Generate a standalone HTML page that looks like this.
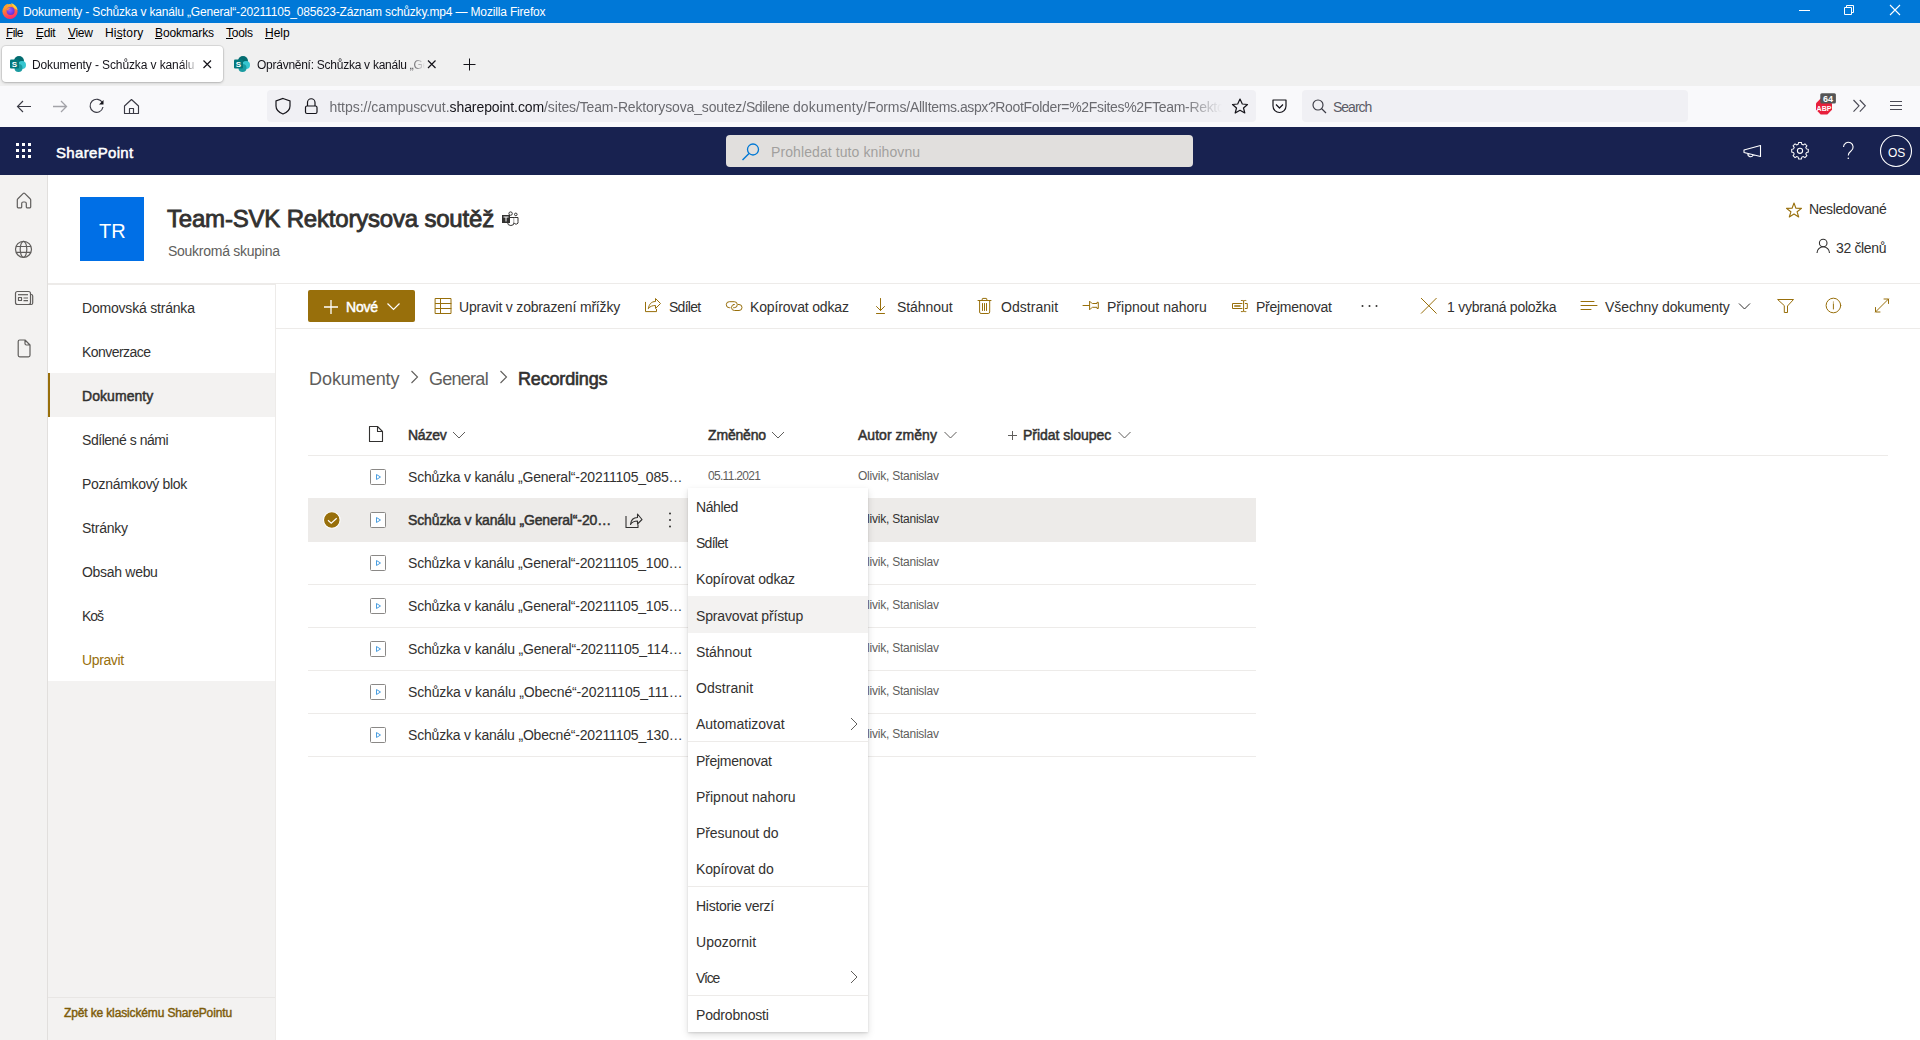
<!DOCTYPE html>
<html><head><meta charset="utf-8"><title>SharePoint</title>
<style>
html,body{margin:0;padding:0;width:1920px;height:1040px;overflow:hidden;background:#fff;font-family:"Liberation Sans",sans-serif;}
.t{position:absolute;white-space:nowrap;line-height:1;}
.r{position:absolute;}
svg.r{overflow:visible}
</style></head><body>
<div class="r" style="left:0px;top:0px;width:1920px;height:23px;background:#0078d7;"></div>
<div class="r" style="left:0px;top:23px;width:1920px;height:63px;background:#f0f0f0;"></div>
<div class="r" style="left:0px;top:86px;width:1920px;height:41px;background:#f9f9fb;"></div>
<div class="t" style="left:23.00px;top:6px;font-size:12px;color:#fff;letter-spacing:-0.167px;">Dokumenty - Schůzka v kanálu „General“-20211105_085623-Záznam schůzky.mp4 — Mozilla Firefox</div>
<div class="t" style="left:6.00px;top:27px;font-size:12px;color:#000;letter-spacing:-0.667px;">File</div>
<div class="t" style="left:36.00px;top:27px;font-size:12px;color:#000;letter-spacing:-0.333px;">Edit</div>
<div class="t" style="left:68.00px;top:27px;font-size:12px;color:#000;letter-spacing:-0.333px;">View</div>
<div class="t" style="left:105.00px;top:27px;font-size:12px;color:#000;letter-spacing:0.167px;">History</div>
<div class="t" style="left:155.00px;top:27px;font-size:12px;color:#000;letter-spacing:-0.125px;">Bookmarks</div>
<div class="t" style="left:226.00px;top:27px;font-size:12px;color:#000;letter-spacing:-0.250px;">Tools</div>
<div class="t" style="left:265.00px;top:27px;font-size:12px;color:#000;">Help</div>
<div class="r" style="left:6px;top:38px;width:6px;height:1px;background:#000;"></div>
<div class="r" style="left:36px;top:38px;width:6px;height:1px;background:#000;"></div>
<div class="r" style="left:68px;top:38px;width:7px;height:1px;background:#000;"></div>
<div class="r" style="left:116px;top:38px;width:6px;height:1px;background:#000;"></div>
<div class="r" style="left:155px;top:38px;width:7px;height:1px;background:#000;"></div>
<div class="r" style="left:226px;top:38px;width:7px;height:1px;background:#000;"></div>
<div class="r" style="left:265px;top:38px;width:8px;height:1px;background:#000;"></div>
<div class="r" style="left:2px;top:46px;width:221px;height:36px;background:#fff;border-radius:4px;box-shadow:0 0 0 1px rgba(0,0,0,.08),0 1px 3px rgba(0,0,0,.2)"></div>
<div class="r" style="left:32px;top:56px;width:168px;height:18px;overflow:hidden;-webkit-mask-image:linear-gradient(to right,#000 150px,transparent 166px)">
<div class="t" style="left:0.00px;top:3px;font-size:12px;color:#15141a;letter-spacing:-0.11px">Dokumenty - Schůzka v kanálu „General“</div>
</div>
<div class="r" style="left:257px;top:56px;width:170px;height:18px;overflow:hidden;-webkit-mask-image:linear-gradient(to right,#000 150px,transparent 168px)">
<div class="t" style="left:0.00px;top:3px;font-size:12px;color:#15141a;letter-spacing:-0.26px">Oprávnění: Schůzka v kanálu „General“</div>
</div>
<div class="r" style="left:267px;top:90px;width:989px;height:32px;background:#f0f0f4;border-radius:4px"></div>
<div class="r" style="left:1302px;top:90px;width:386px;height:32px;background:#f0f0f4;border-radius:4px"></div>
<div class="r" style="left:329px;top:90px;width:896px;height:32px;overflow:hidden;-webkit-mask-image:linear-gradient(to right,#000 855px,transparent 893px)">
<div class="t" style="left:0.50px;top:10px;font-size:14px"><span style="color:#6b6b70;letter-spacing:-0.030px">https://campuscvut.</span><span style="color:#15141a;letter-spacing:-0.084px">sharepoint.com</span><span style="color:#6b6b70;letter-spacing:-0.140px">/sites/Team-Rektorysova_soutez/</span><span style="color:#6b6b70;letter-spacing:-0.460px">Sdilene </span><span style="color:#6b6b70;letter-spacing:0.196px">dokumenty/</span><span style="color:#6b6b70;letter-spacing:-0.122px">Forms/</span><span style="color:#6b6b70;letter-spacing:-0.415px">AllItems.aspx?</span><span style="color:#6b6b70;letter-spacing:-0.318px">RootFolder=%2Fsites%2FTeam-Rekto</span><span style="color:#6b6b70;letter-spacing:0.000px">rysova_soutez</span></div>
</div>
<div class="t" style="left:1333.00px;top:100px;font-size:14px;color:#5b5b66;letter-spacing:-1.000px;">Search</div>
<div class="r" style="left:0px;top:127px;width:1920px;height:48px;background:#182250;"></div>
<div class="t" style="left:56.00px;top:145px;font-size:15px;color:#fff;-webkit-text-stroke:0.53px #fff;letter-spacing:0.333px;">SharePoint</div>
<div class="r" style="left:726px;top:135px;width:467px;height:32px;background:#e1dfdd;border-radius:4px"></div>
<div class="t" style="left:771.00px;top:145px;font-size:14px;color:#a19f9d;letter-spacing:0.091px;">Prohledat tuto knihovnu</div>
<div class="t" style="left:1888.00px;top:147px;font-size:12px;color:#fff;">OS</div>
<div class="r" style="left:0px;top:175px;width:47px;height:865px;background:#f3f2f1;"></div>
<div class="r" style="left:47px;top:175px;width:1px;height:865px;background:#e1dfdd;"></div>
<div class="r" style="left:80px;top:197px;width:64px;height:64px;background:#006fe6;"></div>
<div class="t" style="left:99.00px;top:221px;font-size:20px;color:#fff;">TR</div>
<div class="t" style="left:167.00px;top:207px;font-size:24px;color:#323130;-webkit-text-stroke:0.84px #323130;letter-spacing:-0.192px;">Team-SVK Rektorysova soutěž</div>
<div class="t" style="left:168.00px;top:244px;font-size:14px;color:#605e5c;letter-spacing:-0.267px;">Soukromá skupina</div>
<div class="t" style="left:1809.00px;top:202px;font-size:14px;color:#323130;letter-spacing:-0.400px;">Nesledované</div>
<div class="t" style="left:1836.00px;top:241px;font-size:14px;color:#323130;letter-spacing:-0.357px;">32 členů</div>
<div class="r" style="left:48px;top:283px;width:1872px;height:1px;background:#edebe9;"></div>
<div class="r" style="left:48px;top:284px;width:227px;height:1px;background:#edebe9;"></div>
<div class="r" style="left:48px;top:681px;width:227px;height:359px;background:#f3f2f1;"></div>
<div class="r" style="left:275px;top:284px;width:1px;height:756px;background:#edebe9;"></div>
<div class="r" style="left:48px;top:373px;width:227px;height:44px;background:#f3f2f1;"></div>
<div class="r" style="left:48px;top:373px;width:2px;height:44px;background:#986f0b;"></div>
<div class="t" style="left:82.00px;top:301px;font-size:14px;color:#323130;letter-spacing:-0.200px;">Domovská stránka</div>
<div class="t" style="left:82.00px;top:345px;font-size:14px;color:#323130;letter-spacing:-0.556px;">Konverzace</div>
<div class="t" style="left:82.00px;top:389px;font-size:14px;color:#323130;-webkit-text-stroke:0.49px #323130;letter-spacing:0.062px;">Dokumenty</div>
<div class="t" style="left:82.00px;top:433px;font-size:14px;color:#323130;letter-spacing:-0.462px;">Sdílené s námi</div>
<div class="t" style="left:82.00px;top:477px;font-size:14px;color:#323130;letter-spacing:-0.314px;">Poznámkový blok</div>
<div class="t" style="left:82.00px;top:521px;font-size:14px;color:#323130;letter-spacing:-0.233px;">Stránky</div>
<div class="t" style="left:82.00px;top:565px;font-size:14px;color:#323130;letter-spacing:-0.300px;">Obsah webu</div>
<div class="t" style="left:82.00px;top:609px;font-size:14px;color:#323130;letter-spacing:-1.100px;">Koš</div>
<div class="t" style="left:82.00px;top:653px;font-size:14px;color:#986f0b;letter-spacing:-0.383px;">Upravit</div>
<div class="r" style="left:48px;top:997px;width:227px;height:1px;background:#e8e6e4;"></div>
<div class="t" style="left:64.00px;top:1007px;font-size:12px;color:#7d5c0a;-webkit-text-stroke:0.42px #7d5c0a;letter-spacing:-0.138px;">Zpět ke klasickému SharePointu</div>
<div class="r" style="left:276px;top:328px;width:1644px;height:1px;background:#edebe9;"></div>
<div class="r" style="left:308px;top:290px;width:107px;height:32px;background:#986f0b;border-radius:2px"></div>
<div class="t" style="left:346.00px;top:300px;font-size:14px;color:#fff;-webkit-text-stroke:0.49px #fff;letter-spacing:-0.200px;">Nové</div>
<div class="t" style="left:459.00px;top:300px;font-size:14px;color:#323130;letter-spacing:-0.180px;">Upravit v zobrazení mřížky</div>
<div class="t" style="left:669.00px;top:300px;font-size:14px;color:#323130;letter-spacing:-0.720px;">Sdílet</div>
<div class="t" style="left:750.00px;top:300px;font-size:14px;color:#323130;letter-spacing:-0.157px;">Kopírovat odkaz</div>
<div class="t" style="left:897.00px;top:300px;font-size:14px;color:#323130;letter-spacing:-0.057px;">Stáhnout</div>
<div class="t" style="left:1001.00px;top:300px;font-size:14px;color:#323130;letter-spacing:0.037px;">Odstranit</div>
<div class="t" style="left:1107.00px;top:300px;font-size:14px;color:#323130;letter-spacing:0.014px;">Připnout nahoru</div>
<div class="t" style="left:1256.00px;top:300px;font-size:14px;color:#323130;letter-spacing:-0.260px;">Přejmenovat</div>
<div class="t" style="left:1447.00px;top:300px;font-size:14px;color:#323130;letter-spacing:-0.250px;">1 vybraná položka</div>
<div class="t" style="left:1605.00px;top:300px;font-size:14px;color:#323130;letter-spacing:-0.081px;">Všechny dokumenty</div>
<div class="t" style="left:309.00px;top:370px;font-size:18px;color:#605e5c;letter-spacing:-0.062px;">Dokumenty</div>
<div class="t" style="left:429.00px;top:370px;font-size:18px;color:#605e5c;letter-spacing:-0.733px;">General</div>
<div class="t" style="left:518.00px;top:370px;font-size:18px;color:#323130;-webkit-text-stroke:0.63px #323130;letter-spacing:-0.167px;">Recordings</div>
<div class="t" style="left:408.00px;top:428px;font-size:14px;color:#323130;-webkit-text-stroke:0.49px #323130;letter-spacing:-0.250px;">Název</div>
<div class="t" style="left:708.00px;top:428px;font-size:14px;color:#323130;-webkit-text-stroke:0.49px #323130;letter-spacing:-0.167px;">Změněno</div>
<div class="t" style="left:858.00px;top:428px;font-size:14px;color:#323130;-webkit-text-stroke:0.49px #323130;letter-spacing:0.030px;">Autor změny</div>
<div class="t" style="left:1023.00px;top:428px;font-size:14px;color:#323130;-webkit-text-stroke:0.49px #323130;letter-spacing:-0.031px;">Přidat sloupec</div>
<div class="r" style="left:308px;top:455px;width:1580px;height:1px;background:#edebe9;"></div>
<div class="r" style="left:308px;top:498px;width:948px;height:43px;background:#edebe9;"></div>
<div class="r" style="left:308px;top:541px;width:948px;height:1px;background:#edebe9;"></div>
<div class="r" style="left:308px;top:584px;width:948px;height:1px;background:#edebe9;"></div>
<div class="r" style="left:308px;top:627px;width:948px;height:1px;background:#edebe9;"></div>
<div class="r" style="left:308px;top:670px;width:948px;height:1px;background:#edebe9;"></div>
<div class="r" style="left:308px;top:713px;width:948px;height:1px;background:#edebe9;"></div>
<div class="r" style="left:308px;top:756px;width:948px;height:1px;background:#edebe9;"></div>
<div class="r" style="left:308px;top:498px;width:948px;height:43px;background:#edebe9;"></div>
<div class="t" style="left:408.00px;top:470px;font-size:14px;color:#323130;letter-spacing:-0.210px;">Schůzka v kanálu „General“-20211105_085…</div>
<div class="t" style="left:858.00px;top:470px;font-size:12px;color:#605e5c;letter-spacing:-0.231px;">Olivik, Stanislav</div>
<div class="t" style="left:408.00px;top:513px;font-size:14px;color:#323130;-webkit-text-stroke:0.49px #323130;letter-spacing:-0.131px;">Schůzka v kanálu „General“-20…</div>
<div class="t" style="left:858.00px;top:513px;font-size:12px;color:#323130;letter-spacing:-0.231px;">Olivik, Stanislav</div>
<div class="t" style="left:408.00px;top:556px;font-size:14px;color:#323130;letter-spacing:-0.210px;">Schůzka v kanálu „General“-20211105_100…</div>
<div class="t" style="left:858.00px;top:556px;font-size:12px;color:#605e5c;letter-spacing:-0.231px;">Olivik, Stanislav</div>
<div class="t" style="left:408.00px;top:599px;font-size:14px;color:#323130;letter-spacing:-0.210px;">Schůzka v kanálu „General“-20211105_105…</div>
<div class="t" style="left:858.00px;top:599px;font-size:12px;color:#605e5c;letter-spacing:-0.231px;">Olivik, Stanislav</div>
<div class="t" style="left:408.00px;top:642px;font-size:14px;color:#323130;letter-spacing:-0.185px;">Schůzka v kanálu „General“-20211105_114…</div>
<div class="t" style="left:858.00px;top:642px;font-size:12px;color:#605e5c;letter-spacing:-0.231px;">Olivik, Stanislav</div>
<div class="t" style="left:408.00px;top:685px;font-size:14px;color:#323130;letter-spacing:-0.137px;">Schůzka v kanálu „Obecné“-20211105_111…</div>
<div class="t" style="left:858.00px;top:685px;font-size:12px;color:#605e5c;letter-spacing:-0.231px;">Olivik, Stanislav</div>
<div class="t" style="left:408.00px;top:728px;font-size:14px;color:#323130;letter-spacing:-0.189px;">Schůzka v kanálu „Obecné“-20211105_130…</div>
<div class="t" style="left:858.00px;top:728px;font-size:12px;color:#605e5c;letter-spacing:-0.231px;">Olivik, Stanislav</div>
<div class="t" style="left:708.00px;top:470px;font-size:12px;color:#605e5c;letter-spacing:-0.700px;">05.11.2021</div>
<svg class="r" style="left:0;top:0" width="1920" height="1040" viewBox="0 0 1920 1040" fill="none"><!-- firefox logo -->
<defs>
<linearGradient id="ffg" x1="0" y1="0" x2="0.3" y2="1"><stop offset="0" stop-color="#ffd43b"/><stop offset="0.4" stop-color="#ff8a2b"/><stop offset="1" stop-color="#ff2d6a"/></linearGradient>
<radialGradient id="ffp" cx="0.4" cy="0.4" r="0.7"><stop offset="0" stop-color="#9a5cff"/><stop offset="1" stop-color="#5b2bd0"/></radialGradient>
</defs>
<circle cx="10" cy="11.5" r="7.6" fill="url(#ffg)"/>
<path d="M11 3 C14 4 17 6.5 17.5 10 L14 8 Z" fill="#ffcf3a"/>
<path d="M3.5 8 C4.5 5.5 6 4.2 8 3.8 L7 7 Z" fill="#ff9a2e"/>
<circle cx="10.6" cy="11" r="4" fill="url(#ffp)"/>
<path d="M6.5 9.5 C7.5 8 9.5 7.5 11 8 C9 8.5 8 9.5 8.3 11 Z" fill="#ff9140"/>
<!-- window controls -->
<path d="M1799 10.5 H1810" stroke="#fff" stroke-width="1"/>
<path d="M1844.5 7.5 H1851.5 V14.5 H1844.5 Z M1846.5 7.5 V5.5 H1853.5 V12.5 H1851.5" stroke="#fff" stroke-width="1"/>
<path d="M1890 5 L1900 15 M1900 5 L1890 15" stroke="#fff" stroke-width="1.1"/>
<!-- tab favicons -->
<g transform="translate(10,56)">
 <circle cx="9" cy="5" r="5" fill="#036c70"/><circle cx="12" cy="9" r="4" fill="#37c6d0"/><circle cx="8.5" cy="12" r="4" fill="#1a9ba1"/>
 <rect x="0" y="3.5" width="9" height="9" rx="1" fill="#03787c"/><text x="4.5" y="11" font-size="8" font-weight="bold" fill="#fff" text-anchor="middle" font-family="Liberation Sans">S</text>
</g>
<g transform="translate(234,56)">
 <circle cx="9" cy="5" r="5" fill="#036c70"/><circle cx="12" cy="9" r="4" fill="#37c6d0"/><circle cx="8.5" cy="12" r="4" fill="#1a9ba1"/>
 <rect x="0" y="3.5" width="9" height="9" rx="1" fill="#03787c"/><text x="4.5" y="11" font-size="8" font-weight="bold" fill="#fff" text-anchor="middle" font-family="Liberation Sans">S</text>
</g>
<path d="M203.5 60.5 L211 68 M211 60.5 L203.5 68" stroke="#15141a" stroke-width="1.2"/>
<path d="M428 60.5 L435.5 68 M435.5 60.5 L428 68" stroke="#15141a" stroke-width="1.2"/>
<path d="M469.5 58.5 V70.5 M463.5 64.5 H475.5" stroke="#15141a" stroke-width="1"/>
<!-- nav icons -->
<path d="M31 106.5 H17.5 M23 101 L17.5 106.5 L23 112" stroke="#3b3b45" stroke-width="1.15"/>
<path d="M53 106.5 H66.5 M61 101 L66.5 106.5 L61 112" stroke="#a3a3a8" stroke-width="1.3"/>
<path d="M102.5 103 A6.5 6.5 0 1 0 103 107" stroke="#3b3b45" stroke-width="1.15"/>
<path d="M103.5 100 V104.5 H99 Z" fill="#15141a"/>
<path d="M124.5 106 L131.5 99.5 L138.5 106 V113.5 H124.5 Z M129.5 113.5 V108.5 H133.5 V113.5" stroke="#3b3b45" stroke-width="1.15" stroke-linejoin="round"/>
<path d="M283 98.5 L290 101 V106 C290 110 287 112.5 283 114 C279 112.5 276 110 276 106 V101 Z" stroke="#15141a" stroke-width="1.2"/>
<rect x="305.5" y="106" width="11.5" height="7.5" rx="1.5" stroke="#15141a" stroke-width="1.2"/>
<path d="M307.5 106 V102.5 A3.7 3.7 0 0 1 315 102.5 V106" stroke="#15141a" stroke-width="1.2"/>
<path d="M1240 99 L1242.3 104 L1247.5 104.5 L1243.5 108 L1244.8 113 L1240 110.3 L1235.2 113 L1236.5 108 L1232.5 104.5 L1237.7 104 Z" stroke="#15141a" stroke-width="1.2" stroke-linejoin="round"/>
<path d="M1273 100 H1286 V106 A6.5 6.5 0 0 1 1273 106 Z M1276 104.5 L1279.5 108 L1283 104.5" stroke="#15141a" stroke-width="1.2" stroke-linejoin="round"/>
<circle cx="1318" cy="105" r="5" stroke="#3b3b45" stroke-width="1.15"/>
<path d="M1321.5 108.5 L1326 113" stroke="#3b3b45" stroke-width="1.15"/>
<!-- ABP -->
<path d="M1820.7 98.5 H1827.3 L1832 103.2 V109.8 L1827.3 114.5 H1820.7 L1816 109.8 V103.2 Z" fill="#e8203c"/>
<text x="1824" y="110.5" font-size="7" font-weight="bold" fill="#fff" text-anchor="middle" font-family="Liberation Sans">ABP</text>
<rect x="1820.3" y="93.3" width="15.6" height="10.3" rx="1.5" fill="#555"/>
<text x="1828.1" y="102.2" font-size="9" font-weight="bold" fill="#fff" text-anchor="middle" font-family="Liberation Sans">64</text>
<path d="M1853.5 100 L1859 105.8 L1853.5 111.6 M1859.8 100 L1865.3 105.8 L1859.8 111.6" stroke="#4a4a55" stroke-width="1.15"/>
<path d="M1890 101.5 H1902 M1890 105.5 H1902 M1890 109.5 H1902" stroke="#4a4a55" stroke-width="1.15"/>

<!-- suite bar -->
<g fill="#fff">
<rect x="16" y="143" width="3" height="3"/><rect x="22" y="143" width="3" height="3"/><rect x="28" y="143" width="3" height="3"/>
<rect x="16" y="149" width="3" height="3"/><rect x="22" y="149" width="3" height="3"/><rect x="28" y="149" width="3" height="3"/>
<rect x="16" y="155" width="3" height="3"/><rect x="22" y="155" width="3" height="3"/><rect x="28" y="155" width="3" height="3"/>
</g>
<circle cx="753" cy="149.5" r="5.5" stroke="#0078d4" stroke-width="1.3"/>
<path d="M749 153.5 L742.5 160" stroke="#0078d4" stroke-width="1.4"/>
<path d="M1744 150 L1760.5 145.5 V156.5 L1744 152.5 Z M1748 153.5 A2.5 2.5 0 0 0 1753 154.8" stroke="#fff" stroke-width="1.1" stroke-linejoin="round"/>
<g transform="translate(1800,150.8)" stroke="#fff" stroke-width="1.1">
<circle r="2.6"/>
<path d="M-1.5 -8 H1.5 L2 -6 L3.6 -5.3 L5.4 -6.5 L7.5 -4.4 L6.3 -2.6 L7 -1 L9 -0.5 V2.5 L7 3 L6.3 4.6 L7.5 6.4 L5.4 8.5 L3.6 7.3 L2 8 L1.5 10 H-1.5 L-2 8 L-3.6 7.3 L-5.4 8.5 L-7.5 6.4 L-6.3 4.6 L-7 3 L-9 2.5 V-0.5 L-7 -1 L-6.3 -2.6 L-7.5 -4.4 L-5.4 -6.5 L-3.6 -5.3 L-2 -6 Z" transform="translate(0,-1) scale(0.92)"/>
</g>
<path d="M1843.5 147 A4.8 4.8 0 1 1 1851 151 C1849 152.5 1848.3 153.5 1848.3 155.5" stroke="#fff" stroke-width="1.1"/>
<circle cx="1848.3" cy="158.3" r="0.8" fill="#fff"/>
<circle cx="1896" cy="151" r="15.5" stroke="#fff" stroke-width="1.1"/>

<!-- left rail icons -->
<g stroke="#605e5c" stroke-width="1.2" stroke-linejoin="round">
<path d="M17.3 200 Q17.3 199.2 17.9 198.7 L23.3 193.4 Q24 192.8 24.7 193.4 L30.1 198.7 Q30.7 199.2 30.7 200 V207 Q30.7 207.8 29.9 207.8 H27 Q26.3 207.8 26.3 207 V203.5 Q26.3 202 24.8 202 H23.2 Q21.7 202 21.7 203.5 V207 Q21.7 207.8 21 207.8 H18.1 Q17.3 207.8 17.3 207 Z"/>
<circle cx="23.5" cy="249.3" r="8"/><ellipse cx="23.5" cy="249.3" rx="3.3" ry="8"/><path d="M16 246.5 H31 M16 252.3 H31"/>
<rect x="15.5" y="291.5" width="15" height="13" rx="2"/><path d="M30.5 294.5 H31.2 A1.5 1.5 0 0 1 32.7 296 V303 A1.5 1.5 0 0 1 31.2 304.5 H29"/><path d="M18 294.7 H28"/><rect x="18.5" y="297.5" width="3" height="3"/><path d="M23.5 298 H28 M23.5 300.7 H28"/>
<path d="M19.7 340 H25 L30 345 V355.3 A1.5 1.5 0 0 1 28.5 356.8 H19.7 A1.5 1.5 0 0 1 18.2 355.3 V341.5 A1.5 1.5 0 0 1 19.7 340 Z M25 340 V343.5 A1.5 1.5 0 0 0 26.5 345 H30"/>
</g>

<!-- site header icons -->
<g stroke="#323130" stroke-width="1">
<circle cx="510.6" cy="213.6" r="1.7"/><circle cx="515.8" cy="214.4" r="1.3"/>
<path d="M507.5 217.5 H514.2 V222.2 A3.35 3.35 0 0 1 507.5 222.2 Z" fill="#fff"/>
<path d="M514.2 217.5 H518 V221.5 A2 2 0 0 1 514.2 222.8" fill="#fff"/>
</g>
<rect x="502" y="215" width="8" height="8" fill="#323130"/>
<path d="M503.5 217 H508.5 M506 217 V221.5" stroke="#fff" stroke-width="1"/>
<path d="M1794 203 L1795.9 208.2 L1801.5 208.4 L1797.1 211.8 L1798.7 217 L1794 214 L1789.3 217 L1790.9 211.8 L1786.5 208.4 L1792.1 208.2 Z" stroke="#986f0b" stroke-width="1.1" stroke-linejoin="round"/>
<circle cx="1823.2" cy="243" r="3.8" stroke="#323130" stroke-width="1.1"/>
<path d="M1817 253 A6.2 6.2 0 0 1 1829.5 253" stroke="#323130" stroke-width="1.1"/>

<!-- command bar icons -->
<path d="M331 300 V314 M324 307 H338" stroke="#fff" stroke-width="1.3"/>
<path d="M387.5 303.5 L393.5 309.5 L399.5 303.5" stroke="#fff" stroke-width="1.2"/>
<g stroke="#986f0b" stroke-width="1" stroke-linejoin="round" stroke-linecap="round">
<rect x="435.5" y="298.5" width="15.5" height="15"/><path d="M440.5 298.5 V313.5 M435.5 303.5 H451 M435.5 308.5 H451"/>
<path d="M645.5 302.3 V311.6 H656.5 V309.3"/>
<path d="M648.5 308.3 C649 304 651.5 301.5 655.5 301.5 V298.5 L660.5 303.5 L655.5 308.5 V305.5 C652.5 305.5 650 306.3 648.5 308.3 Z"/>
<path d="M730 307.7 H729.3 A3 3 0 0 1 729.3 301.7 H734.3 A3 3 0 0 1 734.3 307.7 H733.6"/>
<path d="M733.6 304.5 H734.5 A3 3 0 0 0 734.5 310.5 H739 A3 3 0 0 0 739 304.5 H738.3"/>
<path d="M880.5 298.5 V310.5 M876.5 306.5 L880.5 310.5 L884.5 306.5 M876.5 313.5 H884.5"/>
<path d="M978 300.5 H991 M979.6 300.5 V312 A1.5 1.5 0 0 0 981.1 313.5 H988.2 A1.5 1.5 0 0 0 989.7 312 V300.5 M982.2 300.5 V299 A0.6 0.6 0 0 1 982.8 298.4 H986.2 A0.6 0.6 0 0 1 986.8 299 V300.5 M982.5 303.5 V310.5 M984.5 303.5 V310.5 M986.5 303.5 V310.5"/>
<path d="M1083 305.5 H1089.5 M1089.6 301.5 V309.5 M1089.8 301.8 C1091 302 1091.8 303.3 1092.5 303.5 H1097 V302.3 H1098.3 V308.5 H1097 V307.3 H1092.5 C1091.8 307.5 1091 309 1089.8 309.2"/>
<path d="M1242 303.5 H1232.5 V308.5 H1242 M1243.6 300.8 V311.3 M1241.3 300.5 C1242.5 300.3 1243.3 300.6 1243.6 301.2 C1243.9 300.6 1244.7 300.3 1245.9 300.5 M1241.3 311.6 C1242.5 311.8 1243.3 311.5 1243.6 310.9 C1243.9 311.5 1244.7 311.8 1245.9 311.6 M1245.3 303.5 H1247.3 V308.5 H1245.3"/>
<path d="M1234.8 306 H1240" stroke-width="1.6"/>
<path d="M1421.3 298.3 L1436.3 313.3 M1436.3 298.3 L1421.3 313.3"/>
<path d="M1581 301.5 H1594 M1581 305.5 H1597 M1581 309.5 H1591"/>
<path d="M1778 299.5 H1793.5 L1787.5 306 V312.5 H1784.3 V306 Z"/>
<circle cx="1833.4" cy="305.5" r="7.3"/><path d="M1833.4 303.8 V309"/><circle cx="1833.4" cy="302" r="0.6" fill="#986f0b" stroke="none"/>
<path d="M1875.5 312 L1888.5 299 M1884 299 H1888.5 V303.5 M1875.5 307.5 V312 H1880"/>
</g>
<circle cx="1362.5" cy="306" r="1" fill="#323130"/><circle cx="1369.5" cy="306" r="1" fill="#323130"/><circle cx="1376.5" cy="306" r="1" fill="#323130"/>
<path d="M1739 303.5 L1744.5 309 L1750 303.5" stroke="#323130" stroke-width="1"/>

<!-- breadcrumb chevrons -->
<path d="M411.5 371 L417.5 377 L411.5 383 M500.5 371 L506.5 377 L500.5 383" stroke="#605e5c" stroke-width="1.1"/>
<!-- table header -->
<path d="M369.5 426.5 H377.5 L382.5 431.5 V441.5 H369.5 Z M377.5 426.5 V431.5 H382.5" stroke="#323130" stroke-width="1.1" stroke-linejoin="round"/>
<path d="M453 432 L459 438 L465 432 M772 432 L778 438 L784 432 M944.5 432 L950.5 438 L956.5 432 M1118.5 432 L1124.5 438 L1130.5 432" stroke="#605e5c" stroke-width="1"/>
<path d="M1012.5 431 V440 M1008 435.5 H1017" stroke="#605e5c" stroke-width="1"/>
<!-- row icons -->
<g stroke="#8a8886" stroke-width="1" fill="#fff">
<rect x="370.5" y="469.5" width="15" height="15" rx="1"/><rect x="370.5" y="512.5" width="15" height="15" rx="1"/><rect x="370.5" y="555.5" width="15" height="15" rx="1"/><rect x="370.5" y="598.5" width="15" height="15" rx="1"/><rect x="370.5" y="641.5" width="15" height="15" rx="1"/><rect x="370.5" y="684.5" width="15" height="15" rx="1"/><rect x="370.5" y="727.5" width="15" height="15" rx="1"/>
</g>
<g fill="none" stroke="#4a9ee0" stroke-width="1" stroke-linejoin="round">
<path d="M376.5 474.5 L380.5 477 L376.5 479.5 Z"/><path d="M376.5 517.5 L380.5 520 L376.5 522.5 Z"/><path d="M376.5 560.5 L380.5 563 L376.5 565.5 Z"/><path d="M376.5 603.5 L380.5 606 L376.5 608.5 Z"/><path d="M376.5 646.5 L380.5 649 L376.5 651.5 Z"/><path d="M376.5 689.5 L380.5 692 L376.5 694.5 Z"/><path d="M376.5 732.5 L380.5 735 L376.5 737.5 Z"/>
</g>
<!-- selected row -->
<circle cx="331.8" cy="520" r="8.3" fill="#986f0b" stroke="#fff" stroke-width="1.1"/>
<path d="M328 520.3 L331.2 523.1 L336.7 518.3" stroke="#fff" stroke-width="1.2"/>
<path d="M626 516 V527.5 H638 V524.5 M630.5 524.5 C631 519.5 634 517.5 637.5 517.5 V514 L642 519.5 L637.5 524 V521 C634.5 521 632 522 630.5 524.5 Z" stroke="#323130" stroke-width="1.1" stroke-linejoin="round"/>
<circle cx="670" cy="513.5" r="1" fill="#323130"/><circle cx="670" cy="520" r="1" fill="#323130"/><circle cx="670" cy="526.5" r="1" fill="#323130"/>
</svg>
<div class="r" style="left:688px;top:488px;width:180px;height:544px;background:#fff;box-shadow:0 3.2px 7.2px rgba(0,0,0,.133),0 0.6px 1.8px rgba(0,0,0,.11)"></div>
<div class="r" style="left:688px;top:596px;width:180px;height:37px;background:#f3f2f1;"></div>
<div class="r" style="left:688px;top:741px;width:180px;height:1px;background:#edebe9;"></div>
<div class="r" style="left:688px;top:886px;width:180px;height:1px;background:#edebe9;"></div>
<div class="r" style="left:688px;top:995px;width:180px;height:1px;background:#edebe9;"></div>
<div class="t" style="left:696.00px;top:500px;font-size:14px;color:#323130;letter-spacing:-0.400px;">Náhled</div>
<div class="t" style="left:696.00px;top:536px;font-size:14px;color:#323130;letter-spacing:-0.740px;">Sdílet</div>
<div class="t" style="left:696.00px;top:572px;font-size:14px;color:#323130;letter-spacing:-0.157px;">Kopírovat odkaz</div>
<div class="t" style="left:696.00px;top:609px;font-size:14px;color:#323130;letter-spacing:-0.156px;">Spravovat přístup</div>
<div class="t" style="left:696.00px;top:645px;font-size:14px;color:#323130;letter-spacing:-0.057px;">Stáhnout</div>
<div class="t" style="left:696.00px;top:681px;font-size:14px;color:#323130;letter-spacing:0.037px;">Odstranit</div>
<div class="t" style="left:696.00px;top:717px;font-size:14px;color:#323130;">Automatizovat</div>
<div class="t" style="left:696.00px;top:754px;font-size:14px;color:#323130;letter-spacing:-0.260px;">Přejmenovat</div>
<div class="t" style="left:696.00px;top:790px;font-size:14px;color:#323130;">Připnout nahoru</div>
<div class="t" style="left:696.00px;top:826px;font-size:14px;color:#323130;letter-spacing:-0.073px;">Přesunout do</div>
<div class="t" style="left:696.00px;top:862px;font-size:14px;color:#323130;letter-spacing:-0.155px;">Kopírovat do</div>
<div class="t" style="left:696.00px;top:899px;font-size:14px;color:#323130;letter-spacing:-0.269px;">Historie verzí</div>
<div class="t" style="left:696.00px;top:935px;font-size:14px;color:#323130;letter-spacing:0.025px;">Upozornit</div>
<div class="t" style="left:696.00px;top:971px;font-size:14px;color:#323130;letter-spacing:-1.267px;">Více</div>
<div class="t" style="left:696.00px;top:1008px;font-size:14px;color:#323130;letter-spacing:-0.180px;">Podrobnosti</div>
<svg class="r" style="left:0;top:0" width="1920" height="1040" viewBox="0 0 1920 1040" fill="none"><path d="M851 718 L857 724 L851 730 M851 971 L857 977 L851 983" stroke="#605e5c" stroke-width="1"/></svg>
</body></html>
